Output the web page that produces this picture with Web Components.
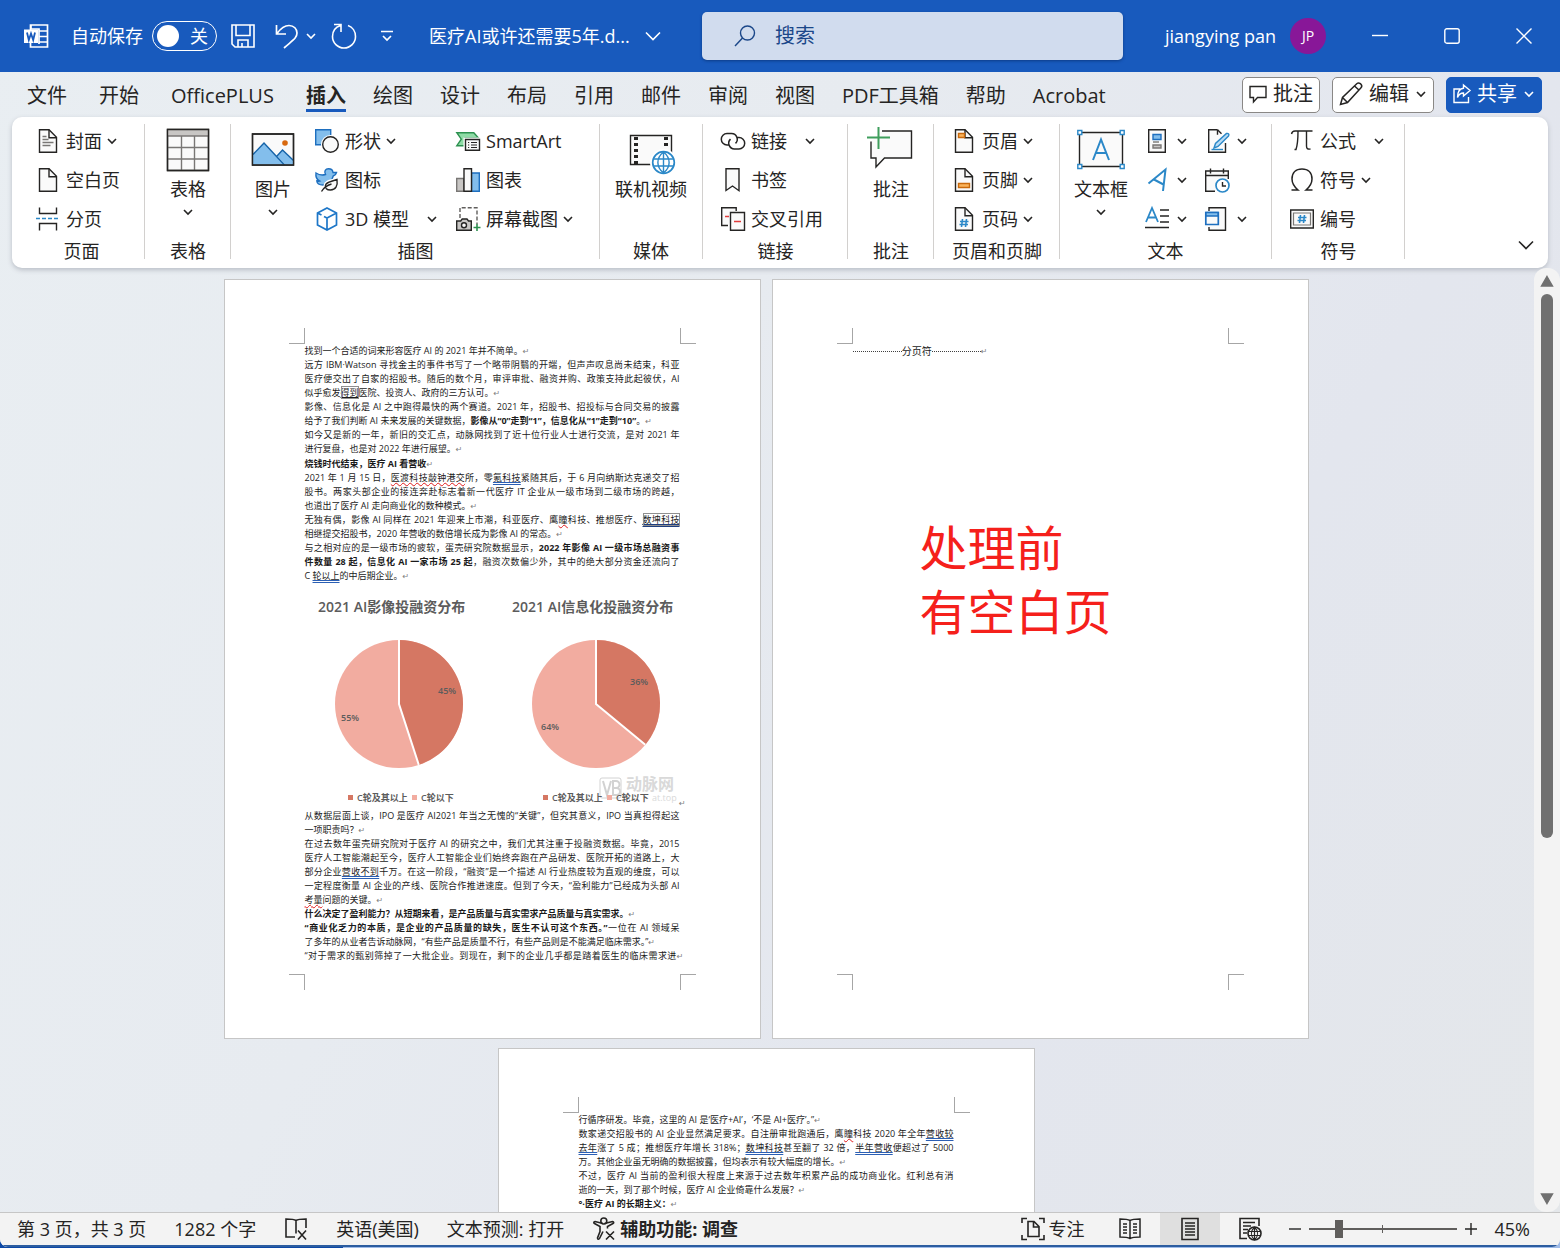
<!DOCTYPE html>
<html lang="zh-CN">
<head>
<meta charset="utf-8">
<title>医疗AI或许还需要5年.docx - Word</title>
<style>
  html, body { margin: 0; height: 100%; }
  body {
    background: linear-gradient(90deg, #0c48a6 22%, #9fbbe8 22%);
    font-family: "Open Sans", "Noto Sans CJK SC", sans-serif;
    font-size: 18px;
    line-height: 24px;
    color: #252423;
    overflow: hidden;
  }
</style>
</head>
<body>
<word-app></word-app>

<script>
const PAGE = `<path d="M3.5.7h9.5l7.5 7.5v15.1h-17z" fill="#fafafa"/><path d="M13 .7v8h7.5"/>`;

// name: [width, height, markup]
const ICONS = {
  chevron: [12, 12, `<path d="M2 4l4 4 4-4" stroke-width="1.600"/>`],
  chevronBig: [18, 18, `<path d="M2 5.500l7 7 7-7" stroke-width="1.6"/>`],

  word: [24, 24, `<path d="M6.500 6V1h17v22h-17v-4M15 7h8M15 12.500h8M15 18h8M7 1v4h8v15" stroke-width="1.700"/><path d="M0 5.500h14v13.500H0z" fill="#fff" stroke="none"/><path d="M3 8.500l1.800 7.500L7 9.500 9.200 16 11 8.500" stroke="#185abd" stroke-width="1.800"/>`],
  save: [24, 24, `<path d="M1 1h22v22H4l-3-3zM5 1v10.500h14V1M7 23v-7h10v7M11 23v-4" stroke-width="1.600"/>`],
  undo: [24, 24, `<path d="M1.500 1v9h9.500M2 9.500C6 4 9.500 1.500 14 1.500c5 0 8 3.500 8 7.500 0 5-4 7-13 15" stroke-width="1.700"/>`],
  redo: [26, 26, `<path d="M3 1.500h7V9M9.500 2.500C5 4 1.500 8 1.500 13.500a11.500 11.500 0 0 0 23 0c0-5-3-9.500-7.500-11" stroke-width="1.600"/>`],
  customize: [12, 12, `<path d="M0 1.500h12M2 6l4 4 4-4" stroke-width="1.700"/>`],
  search: [22, 22, `<circle cx="13.500" cy="8" r="7"/><path d="M8.500 13L1 21"/>`],
  minimize: [16, 16, `<path d="M0 7.500h16"/>`],
  maximize: [16, 16, `<rect x=".8" y=".8" width="14.400" height="14.400" rx="2"/>`],
  close: [16, 16, `<path d="M.5.5l15 15M15.500.5l-15 15"/>`],

  note: [18, 18, `<path d="M1 1.500h16v11H8.500L4.500 17v-4.500H1z"/>`],
  pencil: [24, 24, `<path d="M1.500 22.500l2-7L18 1.500c1.500-1 3.500 0 4 .8.800 1 .8 2.700 0 3.500L8.500 20.500zM3.500 15.500l5 5M15.500 4l5 4.500" stroke-width="1.500"/>`],
  share: [18, 20, `<path d="M7 5H1v13.500h14.500V13M10.500 1l6.500 5.500-6.500 5.500V9C7 9 5.500 11 4.500 13.500 4.500 8 7 4.500 10.500 4.200z" stroke-width="1.400"/>`],

  cover: [24, 24, PAGE + `<path d="M6.500 7.500h4M6.500 10.500h6M6.500 13.500h11M6.500 16.500h8" stroke="#797775"/>`],
  blank: [24, 24, PAGE],
  pagebreak: [24, 24, `<path d="M3.500.5v6h17v-6M3.500 23.500v-7h17v7"/><path d="M0 11.500h24" stroke="#2b88c8" stroke-dasharray="4 2"/>`],
  table: [48, 48, `<path d="M3.500 3.500h41v41h-41z" fill="#fafafa"/><path d="M4 4h40v6H4z" fill="#c8c6c4" stroke="none"/><path d="M17.500 10v34M30.500 10v34M4 10h40M4 21.500h40M4 33h40" stroke="#797775"/><path d="M3.500 3.500h41v41h-41z"/>`],
  picture: [48, 48, `<path d="M3.500 8h41v31h-41z" fill="#fafafa"/><path d="M4 29L15 17l20 21.500H4z" fill="#83beec" stroke="none"/><path d="M28 30l5.500-6 10.500 10v4.500H36z" fill="#83beec" stroke="none"/><path d="M4 28.500L15 17l20 21.500M28 30l5.500-6 11 10.500" stroke="#1563a8"/><circle cx="36" cy="17" r="2.800" fill="#d8690f" stroke="none"/><path d="M3.500 8h41v31h-41z"/>`],
  shapes: [24, 24, `<path d="M.7.7h15v15h-15z" fill="#83beec" stroke="#1e6fbf"/><circle cx="15.500" cy="15.500" r="9.500" fill="#fff" stroke="none"/><circle cx="15.500" cy="15.500" r="7.800" fill="#fafafa"/>`],
  icons: [24, 24, `<path d="M1 5c3 2 6 2.500 9.500 1.500C8.800 3 10.500.7 13.500.7c2.500 0 4.300 1.500 4.500 3.800h3.500c-.5 2-1.500 3-3.300 3.500C17 13 14 17 8 17c-4 0-6-2-6.200-4 1 .3 2 .2 2.700 0C1.500 11.500.5 8.500 1 5z" fill="#83beec" stroke="#1e6fbf"/><path d="M22 11.500c1 6.500-1.500 10.500-6.500 10.500-4 0-5.500-2-5-4.500.5-4 5.500-3.500 11.500-6z" fill="#fff" stroke="#fff" stroke-width="4"/><path d="M22 11.500c1 6.500-1.500 10.500-6.500 10.500-4 0-5.500-2-5-4.500.5-4 5.500-3.500 11.500-6z" fill="#fafafa"/><path d="M6.500 23.500c2-3.500 5-6 10-7.500"/>`],
  cube: [24, 24, `<path d="M12 1l9.500 5v12L12 23 2.500 18V6zM2.500 6l4 2M21.500 6L12 11v12M12 11L9 9.500" stroke="#1e77c8" stroke-width="1.700"/>`],
  smartart: [24, 24, `<path d="M.8 3.700h17l4.500 5H9v8H.8l4.500-6.500z" fill="#8fdca6" stroke="#2d9150"/><path d="M9.500 10.500h14v10.800h-14z" fill="#fafafa" stroke="#fff" stroke-width="4"/><path d="M9.500 10.500h14v10.800h-14z" fill="#fafafa"/><path d="M12 13.500h1.200M15 13.500h6M12 16h1.200M15 16h6M12 18.500h1.200M15 18.500h6" stroke-width="1.200"/>`],
  chart: [24, 24, `<path d="M.7 10.500h7v12.800h-7z" fill="#c8c6c4" stroke="#797775"/><path d="M15.500 5h7.800v18.300h-7.800z" fill="#83beec" stroke="#1e6fbf"/><path d="M8 .7h7.500v22.600H8z" fill="#fafafa"/>`],
  screenshot: [24, 24, `<path d="M4 11V.7h17V17" stroke-dasharray="4 2" stroke="#605e5c"/><path d="M.7 14h4l1.500-2H11l1.500 2h2.800v9.300H.7z" fill="#c8c6c4"/><circle cx="8" cy="18.300" r="2.500" fill="#fafafa"/><path d="M21 17v7M17.500 20.500h7" stroke="#2d9150" stroke-width="1.600"/>`],
  video: [48, 48, `<path d="M3.500 9.500h41v29h-41z" fill="#fafafa"/><path d="M9 11v28M39 11v12" stroke-width="4" stroke-dasharray="3 3"/><circle cx="36.500" cy="36.500" r="13.500" fill="#fff" stroke="none"/><circle cx="36.500" cy="36.500" r="10.800" fill="#fff" stroke="#2b88c8" stroke-width="1.700"/><path d="M36.500 26v21M27 33h19M27 40h19M36.500 26c-7.500 6-7.500 15 0 21M36.500 26c7.500 6 7.500 15 0 21" stroke="#2b88c8"/>`],
  link: [24, 24, `<path d="M8 16H6a5.700 5.700 0 0 1 0-11.400h4.500a5.700 5.700 0 0 1 4 9.800M16 8.500h2a5.700 5.700 0 0 1 0 11.400h-4.500a5.700 5.700 0 0 1-4-9.800" stroke-width="1.500"/>`],
  bookmark: [24, 24, `<path d="M5 .7h13v22L11.500 18 5 22.500z" fill="#fafafa"/>`],
  crossref: [24, 24, `<path d="M7 18.500H.7V.7h14.500V4" fill="#fafafa"/><path d="M9.500 5.500h14v17.800h-14z" fill="#fafafa"/><path d="M4 9.500h4M13 14.500h7" stroke="#e03c3c"/>`],
  comment: [48, 48, `<path d="M15 5h29.500v27H17.500L9 41v-9H4V15.500" fill="#fafafa"/><path d="M11.500 1v22M0 11.500h23" stroke="#3f9e5c" stroke-width="2"/>`],
  header: [24, 24, PAGE + `<path d="M6.500 4.500h6v4h-6z" fill="#fbb45c" stroke="#c96a0d"/>`],
  footer: [24, 24, PAGE + `<path d="M6.500 15.500h11v4h-11z" fill="#fbb45c" stroke="#c96a0d"/>`],
  pagenum: [24, 24, PAGE + `<path d="M10.500 12L9.500 20M14.500 12l-1 8M8 14.500h8.500M7.500 17.500H16" stroke="#2b88c8" stroke-width="1.600"/>`],
  textbox: [48, 48, `<path d="M2.500 6.500h43v34h-43z" fill="#fafafa"/><path d="M16 34l8-20.500L32 34M19 27h10" stroke="#2b88c8" stroke-width="2"/><path d="M.8 4.500h4v4h-4zM43.200 4.500h4v4h-4zM.8 38.500h4v4h-4zM43.200 38.500h4v4h-4z" fill="#fff" stroke="#2b88c8"/>`],
  parts: [24, 24, `<path d="M3.700.7h16.600v22.600H3.700z" fill="#fafafa"/><path d="M8 5.500h8v5H8z" fill="#83beec" stroke="#1e6fbf"/><path d="M8 13h6" stroke="#797775"/><path d="M8 16h8v3H8z" fill="#c8c6c4" stroke="#797775"/>`],
  wordart: [24, 24, `<path d="M3.500 15.500L20.500 1.500 18 23M9 11.500l9.500 5" stroke="#2b88c8" stroke-width="2"/>`],
  dropcap: [24, 24, `<path d="M1 15L7 1l6 14M3 10.500h8" stroke="#2b88c8" stroke-width="1.800"/><path d="M15 3h9M15 9h9M15 15h9M0 20.500h24"/>`],
  signature: [24, 24, `<path d="M12.500.7H3.700v22.600h16.800V14M12.500.7v5" fill="#fafafa"/><path d="M12.500.7l4 4"/><path d="M9 19l1.500-4.500L21.500 4.500c2-.5 3 1 2 2.500L13 17.500z" fill="#b9dcf5" stroke="#2b88c8"/><path d="M6.500 20.500H18" stroke="#2b88c8"/>`],
  datetime: [24, 24, `<path d="M10 23.300H.7V3h22.600v8" fill="#fafafa"/><path d="M.7 7.500h22.600M5.500.5v5M18.500.5v5"/><circle cx="17.500" cy="17.500" r="6.500" fill="#fff" stroke="#2b88c8" stroke-width="1.700"/><path d="M17.500 14v4H21"/>`],
  object: [24, 24, `<path d="M4 4V.7h16.500v22.600H4V20" fill="#fafafa"/><path d="M.8 5.500h12.500v12H.8z" fill="#fafafa" stroke="#1e6fbf" stroke-width="1.700"/><path d="M1 5.500h12v3.500H1z" fill="#83beec" stroke="#1e6fbf"/>`],
  pi: [24, 24, `<path d="M1.500 5c.5-2.500 1.500-3 3.500-3h17.500M8 2c0 8-.5 14-2 18.500H4.500M16.500 2v15c0 2.500 1 3.500 4 3"/>`],
  omega: [24, 24, `<path d="M1.500 22h6.500c-3.500-3-6-6-6-11C2 4.500 6 1 12 1s10 3.500 10 10c0 5-2.500 8-6 11h6.500" stroke-width="1.500"/>`],
  number: [24, 24, `<path d="M.7 3h22.600v18H.7z" fill="#fafafa"/><path d="M3.500 6h17v12h-17z" stroke="#797775" stroke-width="1.200"/><path d="M10.500 8l-1 8M14.500 8l-1 8M8 10.500h8.500M7.500 13.500H16" stroke="#2b88c8" stroke-width="1.600"/>`],

  proof: [24, 24, `<path d="M12 3.500v13M12 3.500C10 2 5 2 2 2v18h9M12 3.500C14 2 19 2 22 2v9M14 13.500l8 9M22 13.500l-8 9" stroke-width="1.600"/>`],
  access: [24, 24, `<path d="M11 6.500L3 4.500C1.500 4.500 1.500 6 2.500 6.500L8 9.500v5L5.500 21c0 1.500 1.500 1.500 2 .5l3.500-7M12.500 6.500l8-2c1.500 0 1.500 1.500.5 2L15.500 9.500v2M14 14.500l8 8M22 14.500l-8 8" stroke-width="1.600"/><circle cx="11.800" cy="4" r="3" stroke-width="1.600"/>`],
  focus: [24, 24, `<path d="M1 6V1.500h5M18 1.500h5V6M1 18v4.500h5M18 22.500h5V18M7 4.500h6l5 5v10H7zM12.500 5v5H18" stroke-width="1.600"/>`],
  read: [24, 24, `<path d="M12 3.500C9.500 2 5 2 2 2v18c3 0 7.500 0 10 1.500C14.500 20 19 20 22 20V2c-3 0-7.500 0-10 1.500zv18M5 7h4M5 10h4M5 13h4M5 16h4M15 7h4M15 10h4M15 13h4M15 16h4" stroke-width="1.500"/>`],
  print: [24, 24, `<path d="M4 1.500h16v21H4zM7 6h10M7 9h10M7 12h10M7 15h10M7 18h10" stroke-width="1.600"/>`],
  web: [24, 24, `<path d="M9 21.500H2v-20h19V9M5 5.500h12M5 9h8M5 12.500h5M5 16h4" stroke-width="1.600"/><circle cx="16.500" cy="16.500" r="6.500" stroke-width="1.600"/><path d="M16.500 10v13M10 14.500h13M10 18.500h13M16.500 10c-4 4-4 9 0 13M16.500 10c4 4 4 9 0 13" stroke-width="1.200"/>`],
  minus: [12, 12, `<path d="M0 6h12" stroke-width="1.400"/>`],
  plus: [12, 12, `<path d="M0 6h12M6 0v12" stroke-width="1.400"/>`],
  up: [14, 12, `<path d="M7 1.500l5.500 9.500h-11z" fill="#707070" stroke="#707070"/>`],
  down: [14, 12, `<path d="M7 10.500l5.500-9.500h-11z" fill="#707070" stroke="#707070"/>`]
};

const BUTTON_RESET = `
  button { margin: 0; padding: 0; border: 0; background: none; font: inherit; color: inherit; cursor: default; white-space: nowrap; }
`;

class BaseElement extends HTMLElement {
  constructor() {
    super();
    this.attachShadow({ mode: 'open' });
  }

  connectedCallback() {
    if (!this.rendered) {
      this.render();
      this.rendered = true;
    }
  }
}

class UiIcon extends BaseElement {
  render() {
    const [w, h, body] = ICONS[this.getAttribute('name')];
    this.shadowRoot.innerHTML = `
      <style>
        :host { display: inline-block; flex: none; width: ${w}px; height: ${h}px; }
        svg   { display: block; overflow: visible; }
      </style>
      <svg width="${w}" height="${h}" viewBox="0 0 ${w} ${h}" fill="none" stroke="currentColor" stroke-width="1.4" aria-hidden="true">${body}</svg>
    `;
  }
}
customElements.define('ui-icon', UiIcon);

class TitleBar extends BaseElement {
  render() {
    this.shadowRoot.innerHTML = `
      <style>
        ${BUTTON_RESET}
        :host { display: flex; align-items: center; height: 72px; background: #185abd; color: #fff; }
        .left { display: flex; align-items: center; flex: 0 0 45%; box-sizing: border-box; padding-left: 24px; }
        button { display: flex; align-items: center; }
        label { display: flex; align-items: center; gap: 9px; margin: 0 14px 0 23px; white-space: nowrap; }
        .pill {
          display: flex; align-items: center; justify-content: space-between; box-sizing: border-box;
          width: 65px; height: 30px; padding: 0 8px 0 4px; border: 1px solid #fff; border-radius: 15px;
        }
        .pill input { appearance: none; width: 22px; height: 22px; margin: 0; border-radius: 50%; background: #fff; }
        .undo { gap: 6px; margin: 0 14px 0 20px; }
        .more { margin: 0 36px 0 24px; }
        .name { gap: 14px; }
        .search {
          display: flex; align-items: center; flex: 1; gap: 19px; box-sizing: border-box; height: 48px; margin: 0;
          padding: 0 32px; border-radius: 5px; background: #d1dcee; color: #1b4789; box-shadow: 0 1px 3px #0d3c86;
        }
        input[type=search] { flex: 1; min-width: 0; padding: 0; border: 0; outline: 0; background: none; font: inherit; font-size: 20px; color: inherit; }
        input::placeholder { color: #1b4789; opacity: 1; }
        .user { gap: 14px; margin: 0 18px 0 42px; }
        .avatar { width: 36px; border-radius: 50%; background: #881798; font-size: 14px; line-height: 36px; text-align: center; }
        .win { width: 72px; height: 72px; justify-content: center; }
      </style>
      <div class="left">
        <ui-icon name="word"></ui-icon>
        <label>自动保存<span class="pill"><input type="checkbox" role="switch"><span>关</span></span></label>
        <button aria-label="保存"><ui-icon name="save"></ui-icon></button>
        <button class="undo" aria-label="撤消"><ui-icon name="undo"></ui-icon><ui-icon name="chevron"></ui-icon></button>
        <button aria-label="重复"><ui-icon name="redo"></ui-icon></button>
        <button class="more" aria-label="自定义快速访问工具栏"><ui-icon name="customize"></ui-icon></button>
        <button class="name">医疗AI或许还需要5年.d...<ui-icon name="chevronBig"></ui-icon></button>
      </div>
      <label class="search"><ui-icon name="search"></ui-icon><input type="search" placeholder="搜索" aria-label="搜索"></label>
      <button class="user">jiangying pan<span class="avatar">JP</span></button>
      <button class="win" aria-label="最小化"><ui-icon name="minimize"></ui-icon></button>
      <button class="win" aria-label="最大化"><ui-icon name="maximize"></ui-icon></button>
      <button class="win" aria-label="关闭"><ui-icon name="close"></ui-icon></button>
    `;
  }
}
customElements.define('title-bar', TitleBar);

class RibbonTabs extends BaseElement {
  render() {
    const tabs = ['文件', '开始', 'OfficePLUS', '插入', '绘图', '设计', '布局', '引用', '邮件', '审阅', '视图', 'PDF工具箱', '帮助', 'Acrobat'];
    this.shadowRoot.innerHTML = `
      <style>
        ${BUTTON_RESET}
        :host { display: flex; align-items: center; height: 45px; padding: 0 18px 0 27px; font-size: 20px; }
        nav { display: flex; flex: 1; gap: 27px; }
        nav button { padding-top: 4px; border-bottom: 3px solid transparent; line-height: 27px; }
        nav button:nth-child(-n+3) { margin-right: 5px; }
        nav .on { font-weight: bold; border-image: linear-gradient(#185abd, #185abd) 1; }
        .actions { display: flex; gap: 12px; }
        .actions button {
          display: flex; align-items: center; gap: 6px; box-sizing: border-box; height: 36px; padding: 0 6px 2px;
          border: 1px solid #8a8886; border-radius: 5px; background: #fff;
        }
        .actions .share { border-color: #185abd; background: #185abd; color: #fff; }
      </style>
      <nav>${tabs.map(t => `<button${t === '插入' ? ' class="on"' : ''}>${t}</button>`).join('')}</nav>
      <div class="actions">
        <button><ui-icon name="note"></ui-icon>批注</button>
        <button><ui-icon name="pencil"></ui-icon>编辑<ui-icon name="chevron"></ui-icon></button>
        <button class="share"><ui-icon name="share"></ui-icon>共享<ui-icon name="chevron"></ui-icon></button>
      </div>
    `;
  }
}
customElements.define('ribbon-tabs', RibbonTabs);

// menu: "menu" opens from the label itself, "split" has an arrow of its own
class RibbonButton extends BaseElement {
  render() {
    const icon  = this.getAttribute('icon');
    const label = this.getAttribute('label') || '';
    const hint  = this.getAttribute('hint') || label;
    const menu  = this.getAttribute('menu');
    const arrow = '<ui-icon name="chevron"></ui-icon>';
    const split = menu === 'split' ? `<button class="arrow" aria-label="${hint}选项">${arrow}</button>` : '';
    this.shadowRoot.innerHTML = `
      <style>
        ${BUTTON_RESET}
        :host { display: flex; align-items: center; height: 39px; }
        button { display: flex; align-items: center; }
        span  { margin: 0 4px 0 6px; }
        .arrow { margin-left: 13px; }
        :host([bare]) .arrow { margin-left: 7px; }
        :host([large]) { display: block; height: auto; }
        :host([large]) button { flex-direction: column; padding-top: 5px; }
        :host([large]) span { margin: 3px 0 5px; }
      </style>
      <button aria-label="${hint}"><ui-icon name="${icon}"></ui-icon>${label && `<span>${label}</span>`}${menu === 'menu' ? arrow : ''}</button>${split}
    `;
  }
}
customElements.define('ribbon-button', RibbonButton);

class RibbonGroup extends BaseElement {
  render() {
    this.shadowRoot.innerHTML = `
      <style>
        :host {
          display: flex; flex-direction: column; flex: 0 0 auto; box-sizing: border-box;
          min-width: var(--group-min, 86px); padding: 0 17px 0 18px; border-right: 1px solid #d2d0ce;
        }
        :host([tight]) { padding: 0 14px; }
        .tools { display: flex; flex: 0 0 115px; gap: 18px; align-items: flex-start; }
        :host([tight]) .tools { gap: 17px; }
        :host([centered]) .tools { justify-content: center; }
        .label { text-align: center; line-height: 24px; }
      </style>
      <div class="tools"><slot></slot></div>
      <div class="label">${this.getAttribute('label')}</div>
    `;
  }
}
customElements.define('ribbon-group', RibbonGroup);

class RibbonBar extends BaseElement {
  render() {
    this.shadowRoot.innerHTML = `
      <style>
        ${BUTTON_RESET}
        :host {
          display: flex; box-sizing: border-box; height: 151px; margin: 0 12px; padding: 7px 13px 9px 6px;
          border-radius: 10px; background: #fff; box-shadow: 0 2px 5px #b9bec6;
        }
        .col { display: flex; flex-direction: column; }
        .col, ribbon-button[large] { margin-top: -3px; }
        .w1 { --group-min: 127px; }
        .w2 { --group-min: 369px; }
        .w3 { --group-min: 103px; }
        .w4 { --group-min: 145px; }
        .w5 { --group-min: 126px; }
        .w6 { --group-min: 212px; }
        .w7 { --group-min: 133px; }
        .fold { margin: auto 0 0 auto; }
      </style>
      <ribbon-group class="w1" label="页面">
        <div class="col">
          <ribbon-button icon="cover" label="封面" menu="menu"></ribbon-button>
          <ribbon-button icon="blank" label="空白页"></ribbon-button>
          <ribbon-button icon="pagebreak" label="分页"></ribbon-button>
        </div>
      </ribbon-group>
      <ribbon-group label="表格" centered>
        <ribbon-button large icon="table" label="表格" menu="menu"></ribbon-button>
      </ribbon-group>
      <ribbon-group class="w2" label="插图">
        <ribbon-button large icon="picture" label="图片" menu="menu"></ribbon-button>
        <div class="col">
          <ribbon-button icon="shapes" label="形状" menu="menu"></ribbon-button>
          <ribbon-button icon="icons" label="图标"></ribbon-button>
          <ribbon-button icon="cube" label="3D 模型" menu="split"></ribbon-button>
        </div>
        <div class="col">
          <ribbon-button icon="smartart" label="SmartArt"></ribbon-button>
          <ribbon-button icon="chart" label="图表"></ribbon-button>
          <ribbon-button icon="screenshot" label="屏幕截图" menu="menu"></ribbon-button>
        </div>
      </ribbon-group>
      <ribbon-group class="w3" label="媒体" centered tight>
        <ribbon-button large icon="video" label="联机视频"></ribbon-button>
      </ribbon-group>
      <ribbon-group class="w4" label="链接">
        <div class="col">
          <ribbon-button icon="link" label="链接" menu="split"></ribbon-button>
          <ribbon-button icon="bookmark" label="书签"></ribbon-button>
          <ribbon-button icon="crossref" label="交叉引用"></ribbon-button>
        </div>
      </ribbon-group>
      <ribbon-group label="批注" centered>
        <ribbon-button large icon="comment" label="批注"></ribbon-button>
      </ribbon-group>
      <ribbon-group class="w5" label="页眉和页脚">
        <div class="col">
          <ribbon-button icon="header" label="页眉" menu="menu"></ribbon-button>
          <ribbon-button icon="footer" label="页脚" menu="menu"></ribbon-button>
          <ribbon-button icon="pagenum" label="页码" menu="menu"></ribbon-button>
        </div>
      </ribbon-group>
      <ribbon-group class="w6" label="文本" tight>
        <ribbon-button large icon="textbox" label="文本框" menu="menu"></ribbon-button>
        <div class="col">
          <ribbon-button bare icon="parts" hint="文档部件" menu="split"></ribbon-button>
          <ribbon-button bare icon="wordart" hint="艺术字" menu="split"></ribbon-button>
          <ribbon-button bare icon="dropcap" hint="首字下沉" menu="split"></ribbon-button>
        </div>
        <div class="col">
          <ribbon-button bare icon="signature" hint="签名行" menu="split"></ribbon-button>
          <ribbon-button bare icon="datetime" hint="日期和时间"></ribbon-button>
          <ribbon-button bare icon="object" hint="对象" menu="split"></ribbon-button>
        </div>
      </ribbon-group>
      <ribbon-group class="w7" label="符号">
        <div class="col">
          <ribbon-button icon="pi" label="公式" menu="split"></ribbon-button>
          <ribbon-button icon="omega" label="符号" menu="menu"></ribbon-button>
          <ribbon-button icon="number" label="编号"></ribbon-button>
        </div>
      </ribbon-group>
      <button class="fold" aria-label="折叠功能区"><ui-icon name="chevronBig"></ui-icon></button>
    `;
  }
}
customElements.define('ribbon-bar', RibbonBar);

// a sheet of paper with crop marks at the corners of its text area
class DocSheet extends BaseElement {
  render() {
    this.shadowRoot.innerHTML = `
      <style>
        :host {
          display: grid; grid-template: 48px 16px 1fr 16px 48px / 64px 16px 1fr 16px 64px;
          box-sizing: border-box; width: 537px; height: 760px; border: 1px solid #c6c6c6; background: #fff;
        }
        i { border: 0 solid #a6a6a6; }
        .tl { grid-area: 2 / 2; border-width: 0 1px 1px 0; }
        .tr { grid-area: 2 / 4; border-width: 0 0 1px 1px; }
        .bl { grid-area: 4 / 2; border-width: 1px 1px 0 0; }
        .br { grid-area: 4 / 4; border-width: 1px 0 0 1px; }
        div { grid-area: 3 / 3; min-width: 0; }
      </style>
      <i class="tl"></i><i class="tr"></i><div><slot></slot></div><i class="bl"></i><i class="br"></i>
    `;
  }
}
customElements.define('doc-sheet', DocSheet);

class PieCharts extends BaseElement {
  pie(cx, share) {
    const cy = 121, r = 64;
    const a = share * 2 * Math.PI;
    const x = cx + r * Math.sin(a);
    const y = cy - r * Math.cos(a);
    return `
      <circle cx="${cx}" cy="${cy}" r="${r}" fill="#f2aca0"/>
      <path d="M${cx} ${cy}V${cy - r}A${r} ${r} 0 0 1 ${x} ${y}z" fill="#d57763"/>
      <path d="M${cx} ${cy - r}V${cy}L${x} ${y}" fill="none" stroke="#fff" stroke-width="2"/>`;
  }

  legend(x) {
    return `
      <path d="M${x} 212h5v5h-5z" fill="#d57763"/><text x="${x + 9}" y="218">C轮及其以上</text>
      <path d="M${x + 64} 212h5v5h-5z" fill="#f2aca0"/><text x="${x + 73}" y="218">C轮以下</text>`;
  }

  render() {
    this.shadowRoot.innerHTML = `
      <style>
        :host { display: block; height: 226px; }
        svg { display: block; overflow: visible; font-family: "Open Sans", "Noto Sans CJK SC", sans-serif; font-size: 9px; font-weight: 600; fill: #5c5c5c; }
        .title { font-size: 14px; }
        .mark { fill: #d9d9d9; }
        .brand { font-size: 16px; font-weight: bold; }
        .site { font-weight: normal; }
        .ret { fill: #808080; font-family: "DejaVu Sans", sans-serif; font-size: 8px; font-weight: normal; }
      </style>
      <svg width="375" height="226" viewBox="0 0 375 226">
        <text class="title" x="13" y="29">2021 AI影像投融资分布</text>
        <text class="title" x="207" y="29">2021 AI信息化投融资分布</text>
        ${this.pie(94, .45)}
        ${this.pie(291, .36)}
        <text x="133" y="111">45%</text><text x="36" y="138">55%</text>
        <text x="325" y="102">36%</text><text x="236" y="147">64%</text>
        <g class="mark">
          <rect x="295" y="195" width="21" height="20" rx="2" fill="none" stroke="#d2d2d2"/>
          <path d="M298 198l4 14 4-14M308 198v14h3.500a3.500 3.500 0 0 0 0-7H308h3a3.500 3.500 0 0 0 0-7z" fill="none" stroke="#d2d2d2" stroke-width="2"/>
          <text class="brand" x="321" y="207">动脉网</text>
          <text class="site" x="347" y="218">at.top</text>
        </g>
        ${this.legend(43)}
        ${this.legend(238)}
        <text class="ret" x="374" y="223">↵</text>
      </svg>
    `;
  }
}
customElements.define('pie-charts', PieCharts);

class DocArea extends BaseElement {
  render() {
    this.shadowRoot.innerHTML = `
      <style>
        ${BUTTON_RESET}
        :host { display: grid; grid-template-columns: 1fr 26px; min-height: 0; overflow: hidden; }
        .sheets { display: flex; flex-wrap: wrap; justify-content: center; align-content: flex-start; gap: 9px 11px; padding: 11px 2px 0 0; min-height: 0; }
        p { margin: 0; font-size: 9px; line-height: 14px; color: #1a1a1a; }
        p > span { display: block; white-space: nowrap; text-align: justify; text-align-last: justify; }
        p > span:last-child { text-align-last: start; }
        p > span.fill { text-align-last: justify; margin-right: -4px; }
        p > span:last-child::after { content: "↵"; color: #808080; font: 8px "DejaVu Sans", sans-serif; }
        .head { padding-top: 1px; font-weight: bold; }
        u { text-decoration: underline double #2b5fb4 1px; text-underline-offset: 1px; }
        s { text-decoration: underline wavy #e01b1b 1px; text-underline-offset: 1px; }
        mark { outline: 1px solid #8f8f8f; outline-offset: -1px; background: none; color: inherit; text-decoration: underline 1px; }
        mark u { text-decoration-color: #1f3f80; }
        .break { display: flex; align-items: center; width: 135px; font-size: 10px; }
        .break::before, .break i { content: ""; flex: 1; border-top: 1px dotted #404040; }
        .break::after { content: "↵"; color: #808080; font: 8px "DejaVu Sans", sans-serif; }
        .note { margin: 158px 0 0 67px; font-size: 48px; line-height: 64px; color: #f5201b; }
        .scroll { display: flex; flex-direction: column; align-items: center; justify-content: space-between; padding: 7px 0; border-radius: 12px; background: #f3f3f3; }
        .scroll button { display: flex; }
        .track { flex: 1; width: 12px; margin: 7px 0; }
        .thumb { height: 61%; border-radius: 6px; background: #707070; }
      </style>
      <div class="sheets">
        <doc-sheet>
          <p><span>找到一个合适的词来形容医疗 AI 的 2021 年并不简单。</span></p>
          <p><span>远方 IBM·Watson 寻找金主的事件书写了一个略带阴翳的开端，但声声叹息尚未结束，科亚</span><span>医疗便交出了自家的招股书。随后的数个月，审评审批、融资并购、政策支持此起彼伏，AI</span><span>似乎愈发<mark>得到</mark>医院、投资人、政府的三方认可。</span></p>
          <p><span>影像、信息化是 AI 之中跑得最快的两个赛道。2021 年，招股书、招投标与合同交易的披露</span><span>给予了我们判断 AI 未来发展的关键数据，<b>影像从“0”走到“1”，信息化从“1”走到“10”</b>。</span></p>
          <p><span>如今又是新的一年，新旧的交汇点，动脉网找到了近十位行业人士进行交流，是对 2021 年</span><span>进行复盘，也是对 2022 年进行展望。</span></p>
          <p class="head"><span>烧钱时代结束，医疗 AI 看营收</span></p>
          <p><span>2021 年 1 月 15 日，<s>医渡科技敲钟港交</s>所，零<u>氪科技</u>紧随其后，于 6 月向纳斯达克递交了招</span><span>股书。两家头部企业的接连奔赴标志着新一代医疗 IT 企业从一级市场到二级市场的跨越，</span><span>也道出了医疗 AI 走向商业化的数种模式。</span></p>
          <p><span>无独有偶，影像 AI 同样在 2021 年迎来上市潮，科亚医疗、鹰<s>瞳</s>科技、推想医疗、<mark><u>数坤科技</u></mark></span><span>相继提交招股书，2020 年营收的数倍增长成为影像 AI 的常态。</span></p>
          <p><span>与之相对应的是一级市场的疲软，蛋壳研究院数据显示，<b>2022 年影像 AI 一级市场总融资事</b></span><span><b>件数量 28 起，信息化 AI 一家市场 25 起</b>，融资次数偏少外，其中的绝大部分资金还流向了</span><span>C <u>轮以上</u>的中后期企业。</span></p>
          <pie-charts></pie-charts>
          <p><span>从数据层面上谈，IPO 是医疗 AI2021 年当之无愧的“关键”，但究其意义，IPO 当真担得起这</span><span>一项职责吗？</span></p>
          <p><span>在过去数年蛋壳研究院对于医疗 AI 的研究之中，我们尤其注重于投融资数据。毕竟，2015</span><span>医疗人工智能潮起至今，医疗人工智能企业们始终奔跑在产品研发、医院开拓的道路上，大</span><span>部分企业<u>营收不到</u>千万。在这一阶段，“融资”是一个描述 AI 行业热度较为直观的维度，可以</span><span>一定程度衡量 AI 企业的产线、医院合作推进速度。但到了今天，“盈利能力”已经成为头部 AI</span><span><s>考量</s>问题的关键。</span></p>
          <p><span><b>什么决定了盈利能力？从短期来看，是产品质量与真实需求产品质量与真实需求。</b></span></p>
          <p><span><b>“商业化乏力的本质，是企业的产品质量的缺失，医生不认可这个东西。”</b>一位在 AI 领域呆</span><span>了多年的从业者告诉动脉网，“有些产品是质量不行，有些产品则是不能满足临床需求。”</span></p>
          <p><span class="fill">“对于需求的甄别筛掉了一大批企业。到现在，剩下的企业几乎都是踏着医生的临床需求进</span></p>
        </doc-sheet>
        <doc-sheet>
          <p class="break">分页符<i></i></p>
          <p class="note">处理前<br>有空白页</p>
        </doc-sheet>
        <doc-sheet>
          <p><span>行循序研发。毕竟，这里的 AI 是‘医疗+AI’，‘不是 AI+医疗’。”</span></p>
          <p><span>数家递交招股书的 AI 企业显然满足要求。自注册审批跑通后，鹰<s>瞳</s>科技 2020 年全年<u>营收较</u></span><span><u>去年</u>涨了 5 成；推想医疗年增长 318%；<u>数坤科技</u>甚至翻了 32 倍，<u>半年营收</u>便超过了 5000</span><span>万。其他企业虽无明确的数据披露，但均表示有较大幅度的增长。</span></p>
          <p><span>不过，医疗 AI 当前的盈利很大程度上来源于过去数年积累产品的成功商业化。红利总有消</span><span>逝的一天，到了那个时候，医疗 AI 企业倚靠什么发展？</span></p>
          <p><span><b>°·医疗 AI 的长期主义：</b></span></p>
        </doc-sheet>
      </div>
      <div class="scroll">
        <button aria-label="向上滚动"><ui-icon name="up"></ui-icon></button>
        <div class="track"><div class="thumb"></div></div>
        <button aria-label="向下滚动"><ui-icon name="down"></ui-icon></button>
      </div>
    `;
  }
}
customElements.define('doc-area', DocArea);

class StatusBar extends BaseElement {
  render() {
    this.shadowRoot.innerHTML = `
      <style>
        ${BUTTON_RESET}
        :host {
          display: flex; align-items: stretch; justify-content: space-between; height: 32px; padding: 0 30px 0 17px;
          border-top: 1px solid #c6c6c6; border-bottom: 2px solid #2c5da0; background: #f3f3f3;
        }
        div { display: flex; }
        .info { gap: 28px; }
        button { display: flex; align-items: center; gap: 4px; }
        .access { font-weight: bold; }
        .view { width: 60px; justify-content: center; }
        .on { background: #dfdfdf; }
        .focus { margin-right: 15px; }
        .zoom { gap: 8px; align-items: center; margin-left: 9px; }
        input {
          appearance: none; width: 148px; height: 20px; margin: 0;
          background:
            linear-gradient(#605e5c, #605e5c) center / 1px 8px no-repeat,
            linear-gradient(#605e5c, #605e5c) center / 100% 2px no-repeat;
        }
        input::-webkit-slider-thumb { appearance: none; width: 8px; height: 18px; background: #605e5c; }
        .percent { margin-left: 10px; }
      </style>
      <div class="info">
        <button>第 3 页，共 3 页</button>
        <button>1282 个字</button>
        <button aria-label="校对"><ui-icon name="proof"></ui-icon></button>
        <button>英语(美国)</button>
        <button>文本预测: 打开</button>
        <button class="access"><ui-icon name="access"></ui-icon>辅助功能: 调查</button>
      </div>
      <div>
        <button class="focus"><ui-icon name="focus"></ui-icon>专注</button>
        <button class="view" aria-label="阅读视图"><ui-icon name="read"></ui-icon></button>
        <button class="view on" aria-label="页面视图"><ui-icon name="print"></ui-icon></button>
        <button class="view" aria-label="Web 版式视图"><ui-icon name="web"></ui-icon></button>
        <div class="zoom">
          <button aria-label="缩小"><ui-icon name="minus"></ui-icon></button>
          <input type="range" min="0" max="100" value="19" aria-label="缩放">
          <button aria-label="放大"><ui-icon name="plus"></ui-icon></button>
          <button class="percent">45%</button>
        </div>
      </div>
    `;
  }
}
customElements.define('status-bar', StatusBar);

class WordApp extends BaseElement {
  render() {
    this.shadowRoot.innerHTML = `
      <style>
        :host {
          display: grid; grid-template: auto auto auto 1fr auto / 100%; height: calc(100vh - 1px);
          border-radius: 0 0 8px 8px; overflow: hidden;
          background: linear-gradient(120deg, #e9eef2 0%, #e7ebf0 40%, #e3e6ee 70%, #e4e7ea 100%);
        }
      </style>
      <title-bar></title-bar>
      <ribbon-tabs></ribbon-tabs>
      <ribbon-bar></ribbon-bar>
      <doc-area></doc-area>
      <status-bar></status-bar>
    `;
  }
}
customElements.define('word-app', WordApp);
</script>
</body>
</html>
